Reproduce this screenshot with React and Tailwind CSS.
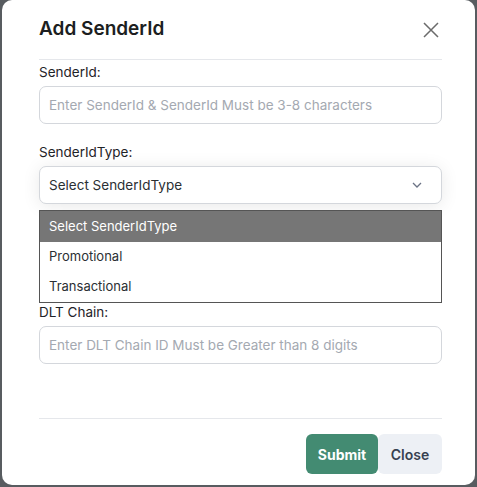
// Add SenderId modal with the SenderIdType dropdown open

const font = { fontFamily: 'Inter, "Noto Sans", sans-serif' }

function Field({ label, children }) {
  return (
    <div className="flex flex-col gap-[4px]">
      <label className="h-[20px] text-[13.5px] leading-[20px] text-[#1f2328]">{label}</label>
      {children}
    </div>
  )
}

function TextInput({ placeholder }) {
  return (
    <input
      placeholder={placeholder}
      className="h-[38px] w-full rounded-[7px] border border-[#d4d7dc] bg-white px-[9px] text-[13.5px] text-[#1f2937] placeholder-[#a4a9b1] outline-none"
    />
  )
}

export default function App() {
  const options = ['Select SenderIdType', 'Promotional', 'Transactional']

  return (
    <div className="h-[487px] w-[477px] bg-[#585c60] pl-[2px]" style={font}>
      <div className="flex h-[485px] w-[473px] flex-col rounded-[10px] bg-white pl-[37px] pr-[33px]">

        {/* Header */}
        <div className="flex h-[60px] items-center justify-between border-b border-[#e5e7eb]">
          <h2 className="text-[19px] font-semibold text-[#1c1e21]">Add SenderId</h2>
          <button className="mr-[2px] flex h-[18px] w-[18px] items-center justify-center text-[#6b6b6b]">
            <svg width="16" height="16" viewBox="0 0 16 16" fill="none" stroke="currentColor" strokeWidth="1.5">
              <path d="M1 1L15 15M15 1L1 15" />
            </svg>
          </button>
        </div>

        {/* Body */}
        <div className="flex flex-1 flex-col gap-[18px] pt-[2px]">
          <Field label="SenderId:">
            <TextInput placeholder="Enter SenderId & SenderId Must be 3-8 characters" />
          </Field>

          <div className="relative">
            <Field label="SenderIdType:">
              <div className="flex h-[38px] items-center justify-between rounded-[7px] border border-[#d4d7dc] bg-white px-[9px] shadow-[0_2px_18px_rgba(0,0,0,0.09)]">
                <span className="text-[13.5px] text-[#2b2f33]">Select SenderIdType</span>
                <svg width="10" height="6" viewBox="0 0 10 6" fill="none" stroke="#6b7385" strokeWidth="1.3" className="mr-[10px]">
                  <path d="M1 1L5 5L9 1" />
                </svg>
              </div>
            </Field>

            {/* Open dropdown list */}
            <div className="absolute left-0 right-0 top-full z-10 mt-[6px] border border-[#555] bg-white">
              {options.map((o, i) => (
                <div
                  key={o}
                  className={
                    i === 0
                      ? 'flex h-[31px] items-center bg-[#767676] px-[9px] text-[13px] text-white'
                      : 'flex h-[30px] items-center px-[9px] text-[13px] text-[#2b2f33]'
                  }
                >
                  {o}
                </div>
              ))}
            </div>
          </div>

          {/* Field hidden under the open list */}
          <div className="flex flex-col gap-[4px]">
            <div className="h-[20px]" />
            <div className="h-[38px] rounded-[7px] border border-[#d4d7dc] bg-white" />
          </div>

          <Field label="DLT Chain:">
            <TextInput placeholder="Enter DLT Chain ID Must be Greater than 8 digits" />
          </Field>
        </div>

        {/* Footer */}
        <div className="flex justify-end border-t border-[#e5e7eb] pb-[11px] pt-[15px]">
          <button className="h-[40px] w-[72px] rounded-[6px] bg-[#438b72] text-[14px] font-bold text-white">
            Submit
          </button>
          <button className="h-[40px] w-[64px] rounded-[6px] bg-[#edf0f5] text-[14px] font-semibold text-[#374151]">
            Close
          </button>
        </div>
      </div>
    </div>
  )
}
